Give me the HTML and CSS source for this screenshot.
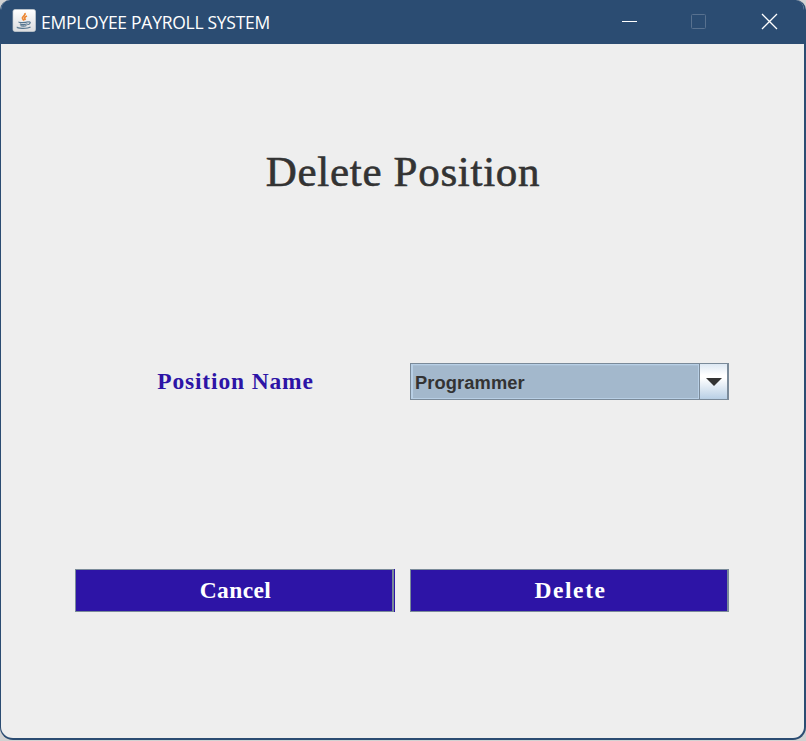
FILE: index.html
```html
<!DOCTYPE html>
<html lang="en">
<head>
<meta charset="utf-8">
<title>EMPLOYEE PAYROLL SYSTEM</title>
<link rel="stylesheet" href="styles.css">
</head>
<body>
<div class="window">
  <header class="titlebar">
    <svg class="app-icon" width="24" height="24" viewBox="0 0 24 24">
      <defs><linearGradient id="tile" x1="0" y1="0" x2="0" y2="1"><stop offset="0" stop-color="#fff"/><stop offset="1" stop-color="#dcdddf"/></linearGradient></defs>
      <rect x="1" y=".5" width="22.5" height="22" rx="2" fill="url(#tile)" stroke="#c9ced3" stroke-width=".7"/>
      <path d="M13 4c1 2.500-3.500 3.500-2.500 5.500.3.700 1 1.200 1.500 2M15 7c-2.500 1-3 2-1.500 4" fill="none" stroke="#ed8733" stroke-width="1.700"/>
      <path d="M7 12.800c-1 1 6 1.200 9 0M16 13c3.500-.8 2.500 2.500-.5 2.700M8 14.800c1 1 5.500 1 7.500 0M8.500 16.500c1 .9 4.500.9 6 0M5.500 18c-2 1.500 10 2 13 0" fill="none" stroke="#56768f" stroke-width="1.200"/>
    </svg>
    <h1 class="app-title">EMPLOYEE PAYROLL SYSTEM</h1>
    <svg class="controls" width="170" height="44" viewBox="0 0 170 44" fill="none">
      <path d="M6 21.500h15" stroke="#fff"/>
      <rect x="75.500" y="14.500" width="14" height="14" rx="1" stroke="#58718f"/>
      <path d="M146 14l15 15M161 14l-15 15" stroke="#fff" stroke-width="1.300"/>
    </svg>
  </header>
  <main class="content">
    <h2 class="heading">Delete Position</h2>
    <div class="row field">
      <label class="label">Position Name</label>
      <div class="combo">
        <span class="combo-value">Programmer</span>
        <span class="combo-arrow"><svg width="16" height="8" viewBox="0 0 16 8"><path d="M0 0h16L8 8z" fill="#333"/></svg></span>
      </div>
    </div>
    <div class="row">
      <button class="btn btn-cancel"><span>Cancel</span></button>
      <button class="btn btn-delete"><span>Delete</span></button>
    </div>
  </main>
</div>
</body>
</html>
```
FILE: styles.css
```css
* { box-sizing: border-box; }
body { margin: 0; background: #d2d2d2; }
.window {
  width: 806px;
  height: 740px;
  background: #eee;
  border: solid #2b4c72;
  border-width: 0 2px 2px 1px;
  border-radius: 10px 10px 13px 13px;
  overflow: hidden;
}
.titlebar {
  height: 44px;
  background: #2b4c72;
  display: flex;
  align-items: flex-start;
  padding-left: 11px;
}
.app-icon { margin-top: 9px; flex: none; }
.app-title {
  margin: 0 0 0 5px;
  font: 400 17.5px/44px "Open Sans", "Noto Sans", sans-serif;
  letter-spacing: -0.27px;
  color: #fff;
  white-space: nowrap;
}
.controls { margin-left: auto; margin-right: 18px; flex: none; }
.content { padding: 103px 75px 0 74px; }
.heading {
  margin: 0 0 166px;
  height: 50px;
  padding-left: 2px;
  font: 400 43px/50px "Liberation Serif", serif;
  letter-spacing: 0.7px;
  color: #333;
  -webkit-text-stroke: 0.6px #333;
  text-align: center;
}
.row {
  display: grid;
  grid-template-columns: 320px 319px;
  column-gap: 15px;
}
.field { margin-bottom: 169px; }
.label {
  padding-left: 1px;
  font: 700 23.5px/37px "Liberation Serif", serif;
  letter-spacing: 0.85px;
  color: #2d14a6;
  text-align: center;
}
.combo {
  height: 37px;
  display: flex;
  border: solid #7a8a99;
  border-width: 1px 2px 1px 1px;
}
.combo-value {
  flex: 1;
  background: #a3b8cc;
  border: solid #b8cfe5;
  border-width: 1px 1px 1px 2px;
  box-shadow: inset 0 1px #a9bfd4;
  padding-left: 2px;
  font: 700 18.3px/35px "Liberation Sans", sans-serif;
  letter-spacing: 0.1px;
  color: #333;
}
.combo-arrow {
  width: 28px;
  padding-left: 1px;
  border-left: 1px solid #7a8a99;
  background: linear-gradient(#dde8f3, #fff 32%, #fff 40%, #b8cfe5);
  display: flex;
  align-items: center;
  justify-content: center;
}
.btn {
  height: 43px;
  padding: 0 0 0 3px;
  border: 1px solid #7a8a99;
  border-right-width: 2px;
  background: #2d14a6;
  color: #fff;
  font: 700 23.5px/41px "Liberation Serif", serif;
  text-align: center;
}
.btn-cancel {
  width: 319px;
  box-shadow: 1px 0 #2d14a6;
  letter-spacing: 0.4px;
}
.btn-delete { letter-spacing: 1.6px; }
```
